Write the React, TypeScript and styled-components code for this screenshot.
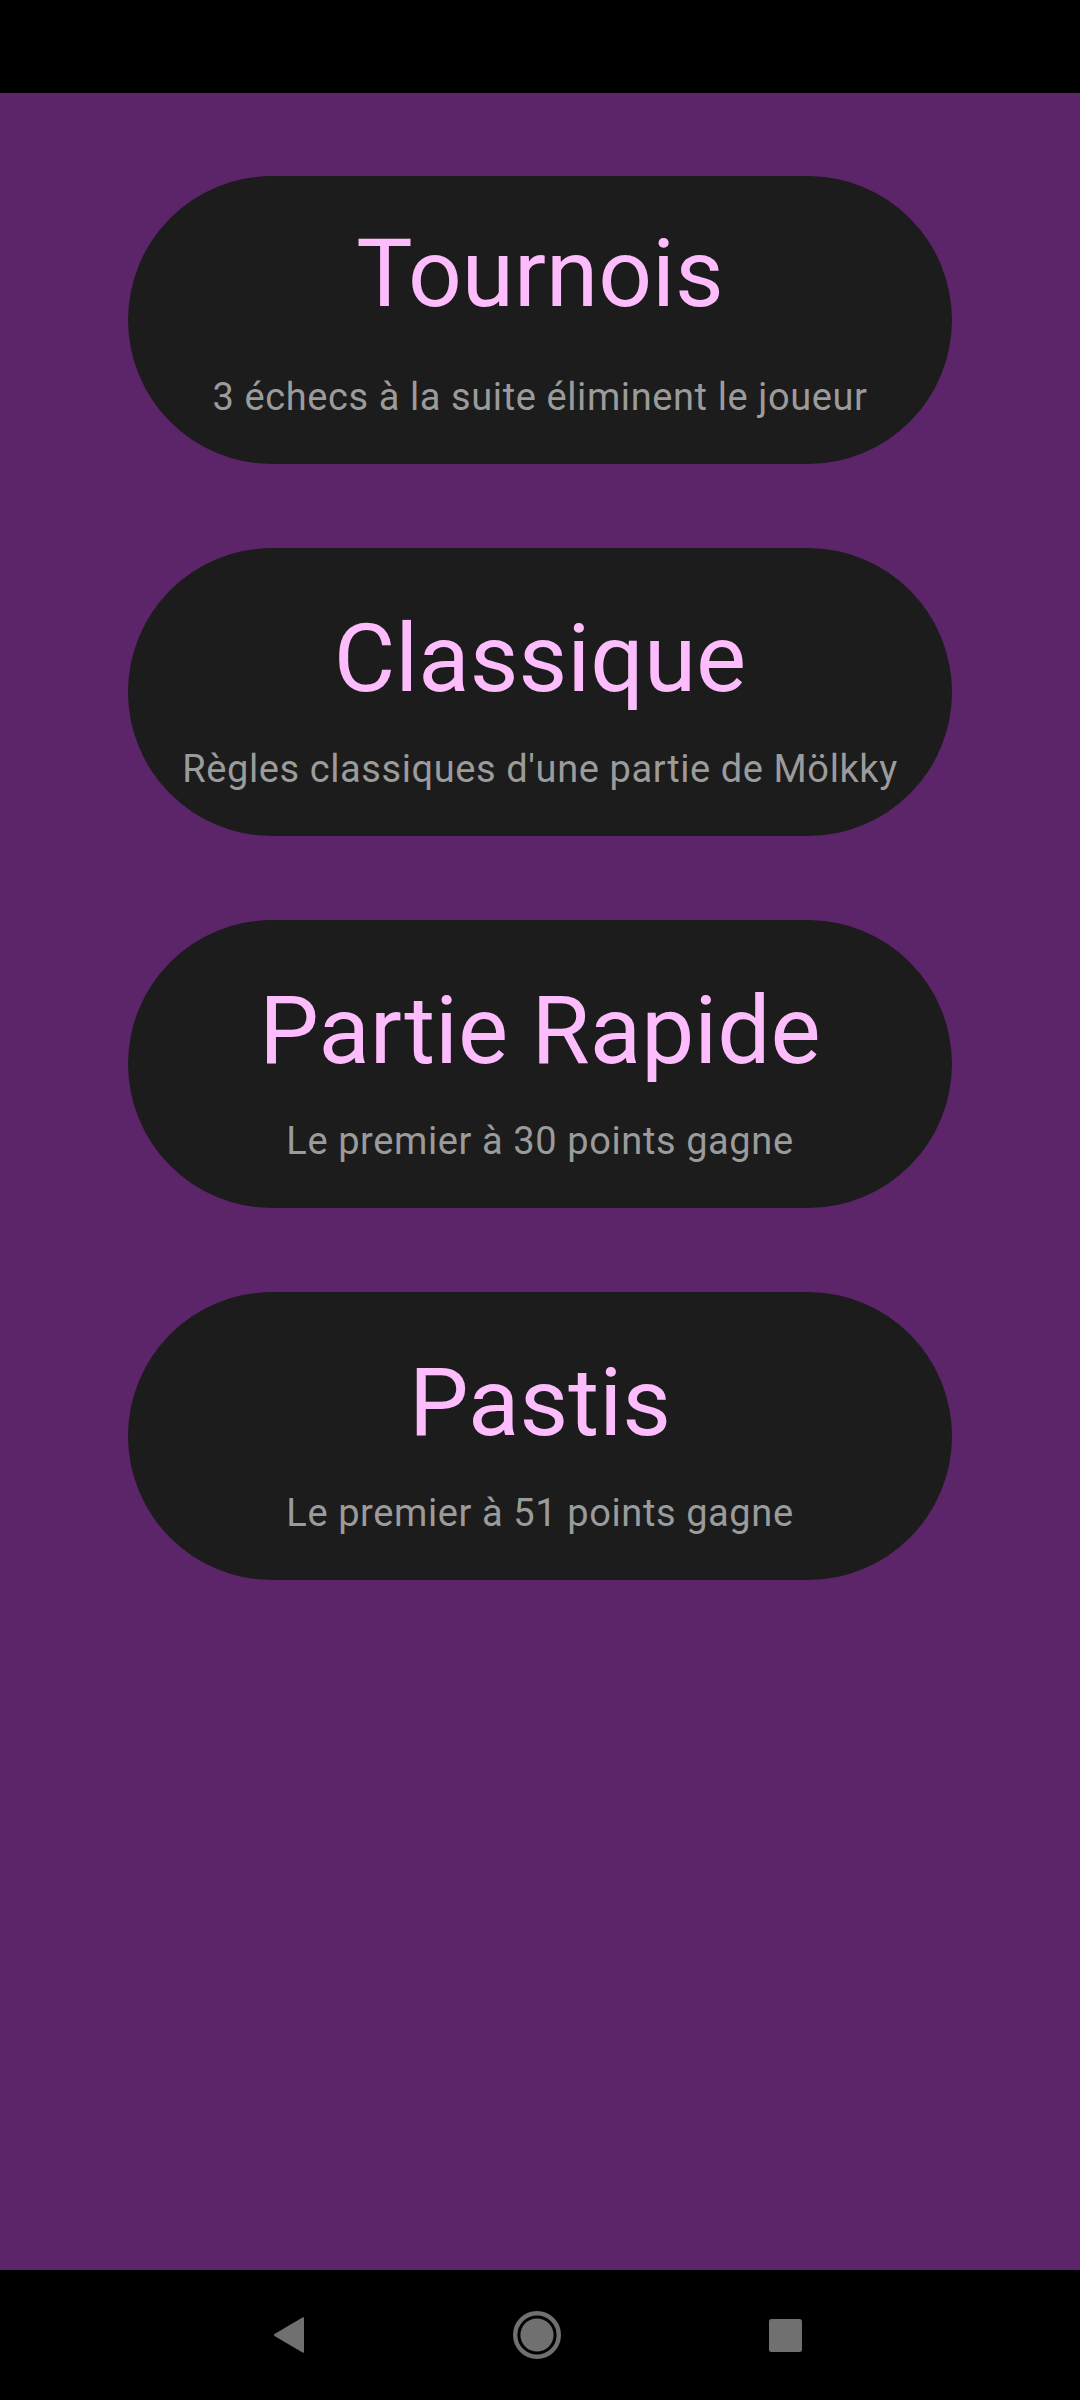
import React from "react";
import styled, { createGlobalStyle } from "styled-components";

const Global = createGlobalStyle`
  html, body { margin: 0; padding: 0; background: #000; }
  body { font-family: Roboto, "Noto Sans", sans-serif; }
`;

const Screen = styled.div`
  width: 1080px;
  height: 2400px;
  display: flex;
  flex-direction: column;
  background: #000;
`;

const StatusBar = styled.div`
  height: 93px;
  flex: none;
  background: #000;
`;

const Main = styled.main`
  flex: 1;
  background: #5c2469;
  display: flex;
  flex-direction: column;
  align-items: center;
  gap: 84px;
  padding-top: 83px;
  box-sizing: border-box;
`;

const Card = styled.button`
  width: 824px;
  height: 288px;
  flex: none;
  border: none;
  border-radius: 144px;
  background: #1c1c1c;
  display: flex;
  flex-direction: column;
  align-items: center;
  padding: 0;
  box-sizing: border-box;
  cursor: pointer;
  font-family: Roboto, "Noto Sans", sans-serif;
`;

const Title = styled.div<{ $raised?: boolean }>`
  font-size: 94.5px;
  line-height: 110px;
  color: #fdbcfb;
  font-weight: 400;
  margin: ${(p) => (p.$raised ? "43px 0 45px" : "56px 0 32px")};
  white-space: nowrap;
`;

const Subtitle = styled.div`
  font-size: 38px;
  line-height: 46px;
  letter-spacing: 0.6px;
  color: #9b9b9b;
  white-space: nowrap;
`;

const NavBar = styled.nav`
  height: 130px;
  flex: none;
  background: #000;
  display: flex;
  align-items: center;
  padding-left: 273px;
  gap: 208px;
  box-sizing: border-box;
`;

const NavIcon = styled.svg`
  display: block;
  fill: #707070;
`;

const modes = [
  { title: "Tournois", sub: "3 échecs à la suite éliminent le joueur", raised: true },
  { title: "Classique", sub: "Règles classiques d'une partie de Mölkky" },
  { title: "Partie Rapide", sub: "Le premier à 30 points gagne" },
  { title: "Pastis", sub: "Le premier à 51 points gagne" },
];

export default function App() {
  return (
    <>
      <Global />
      <Screen>
        <StatusBar />
        <Main>
          {modes.map((m) => (
            <Card key={m.title}>
              <Title $raised={m.raised}>{m.title}</Title>
              <Subtitle>{m.sub}</Subtitle>
            </Card>
          ))}
        </Main>
        <NavBar>
          <NavIcon width="32" height="38" viewBox="0 0 32 38">
            <path
              d="M29.5 1.5 Q31 0.8 31 2.5 L31 35.5 Q31 37.2 29.5 36.5 L1.5 20 Q0.2 19 1.5 18 Z"
              strokeLinejoin="round"
            />
          </NavIcon>
          <NavIcon width="48" height="48" viewBox="0 0 48 48">
            <circle cx="24" cy="24" r="21.8" fill="none" stroke="#707070" strokeWidth="4.4" />
            <circle cx="24" cy="24" r="16.6" />
          </NavIcon>
          <NavIcon width="33" height="33" viewBox="0 0 33 33">
            <rect x="0" y="0" width="33" height="33" rx="2.5" />
          </NavIcon>
        </NavBar>
      </Screen>
    </>
  );
}
